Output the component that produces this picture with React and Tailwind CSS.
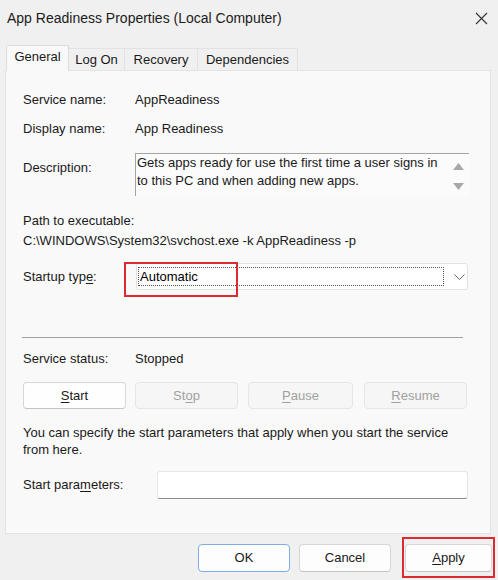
import React from "react"

const Row = ({ label, children, className = "" }) => (
  <div className={`flex h-[20px] items-center ${className}`}>
    <div className="w-[112px]">{label}</div>
    <div>{children}</div>
  </div>
)

const Tab = ({ children, active, w }) =>
  active ? (
    <div className={`${w} relative z-10 -mb-px flex h-[26px] items-center justify-center rounded-t-[2px] border border-b-0 border-[#dcdcdc] bg-[#f9f9f9] pb-[3px]`}>
      {children}
    </div>
  ) : (
    <div className={`${w} flex h-[22px] items-center justify-center border-t border-r border-[#e2e2e2] bg-[#f0f0f0]`}>
      {children}
    </div>
  )

const SvcButton = ({ children, disabled, w, className = "" }) => (
  <div
    className={`${w} ${className} flex h-[27px] items-center justify-center rounded-[4px] border ${
      disabled
        ? "border-[#e6e6e6] bg-[#f6f6f6] text-[#a0a0a0]"
        : "border-[#d6d6d6] border-b-[#c4c4c4] bg-[#fefefe] text-[#1a1a1a]"
    }`}
  >
    {children}
  </div>
)

export default function App() {
  return (
    <div className="h-[580px] w-[498px] overflow-hidden bg-[#f0f0f0] font-['Liberation_Sans',Arial,sans-serif] text-[13px] text-[#1a1a1a]">
      {/* title bar */}
      <div className="flex h-[36px] items-center justify-between pl-[7px] pr-[10px]">
        <span className="text-[14px] text-[#1b1b1b]">App Readiness Properties (Local Computer)</span>
        <svg width="13" height="13" viewBox="0 0 13 13" className="text-[#333]">
          <path d="M1 1 L12 12 M12 1 L1 12" stroke="currentColor" strokeWidth="1.1" />
        </svg>
      </div>

      {/* tabs */}
      <div className="mt-[9px] flex h-[25px] items-end pl-[6px]">
        <Tab active w="w-[63px]">General</Tab>
        <Tab w="w-[56px]">Log On</Tab>
        <Tab w="w-[73px]">Recovery</Tab>
        <Tab w="w-[100px]">Dependencies</Tab>
      </div>

      {/* panel */}
      <div className="ml-[5px] flex h-[464px] w-[486px] flex-col border border-[#e3e3e3] bg-[#f9f9f9] pl-[17px] pt-[19px]">
        <Row label="Service name:">AppReadiness</Row>
        <Row label="Display name:" className="mt-[9px]">App Readiness</Row>

        <div className="mt-[14px] flex">
          <div className="w-[112px] pt-[5px] leading-[20px]">Description:</div>
          <div className="flex h-[43px] w-[334px] border-l border-t border-[#a4a4a4] bg-[#fbfbfb]">
            <div className="flex-1 pl-[1px] leading-[18px]">
              Gets apps ready for use the first time a user signs in to this PC and when adding new apps.
            </div>
            <div className="flex w-[21px] flex-col items-center pt-[9px]">
              <svg width="11" height="7" viewBox="0 0 11 7"><path d="M5.5 0 L11 7 L0 7 Z" fill="#a8a8a8" /></svg>
              <svg width="11" height="7" viewBox="0 0 11 7" className="mt-[13px]"><path d="M0 0 L11 0 L5.5 7 Z" fill="#a8a8a8" /></svg>
            </div>
          </div>
        </div>

        <div className="mt-[15px] flex h-[20px] items-center">Path to executable:</div>
        <div className="flex h-[20px] items-center">C:\WINDOWS\System32\svchost.exe -k AppReadiness -p</div>

        <div className="mt-[12px] flex items-center">
          <div className="w-[113px]">
            Startup typ<span className="underline underline-offset-2">e</span>:
          </div>
          <div className="relative flex h-[27px] w-[332px] items-center rounded-[3px] border border-[#e2e2e2] bg-white pl-[1px]">
            <div className="flex h-[19px] w-[306px] items-center border border-dotted border-[#555] pl-[1px] text-black">
              Automatic
            </div>
            <svg width="11" height="6" viewBox="0 0 11 6" className="ml-[10px]">
              <path d="M0.5 0.5 L5.5 5.5 L10.5 0.5" fill="none" stroke="#666" strokeWidth="1" />
            </svg>
            <div className="absolute left-[-13px] top-[-2px] h-[35px] w-[114px] border-2 border-[#dc2a30]" />
          </div>
        </div>

        <div className="-ml-px mt-[47px] h-px w-[441px] bg-[#a0a0a0]" />

        <Row label="Service status:" className="mt-[11px]">Stopped</Row>

        <div className="mt-[13px] flex">
          <SvcButton w="w-[103px]">
            <span className="underline underline-offset-2">S</span>tart
          </SvcButton>
          <SvcButton disabled w="w-[103px]" className="ml-[9px]">
            St<span className="underline underline-offset-2">o</span>p
          </SvcButton>
          <SvcButton disabled w="w-[105px]" className="ml-[10px]">
            <span className="underline underline-offset-2">P</span>ause
          </SvcButton>
          <SvcButton disabled w="w-[103px]" className="ml-[11px]">
            <span className="underline underline-offset-2">R</span>esume
          </SvcButton>
        </div>

        <p className="mt-[15px] w-[441px] leading-[17px]">
          You can specify the start parameters that apply when you start the service from here.
        </p>

        <div className="mt-[13px] flex items-center">
          <div className="w-[134px]">
            Start para<span className="underline underline-offset-2">m</span>eters:
          </div>
          <div className="h-[28px] w-[311px] rounded-[3px] border border-[#e6e6e6] border-b-[#8c8c8c] bg-white" />
        </div>
      </div>

      {/* footer */}
      <div className="mt-[10px] flex justify-end pr-[6px]">
        <div className="flex h-[28px] w-[92px] items-center justify-center rounded-[4px] border border-[#7fade0] bg-[#fdfdfd]">OK</div>
        <div className="ml-[9px] flex h-[28px] w-[92px] items-center justify-center rounded-[4px] border border-[#d6d6d6] border-b-[#c4c4c4] bg-[#fdfdfd]">Cancel</div>
        <div className="relative ml-[14px] flex h-[28px] w-[87px] items-center justify-center rounded-[4px] border border-[#d6d6d6] border-b-[#c4c4c4] bg-[#fdfdfd]">
          <span>
            <span className="underline underline-offset-2">A</span>pply
          </span>
          <div className="absolute left-[-4px] top-[-8px] h-[41px] w-[93px] border-2 border-[#dc2a30]" />
        </div>
      </div>
    </div>
  )
}
